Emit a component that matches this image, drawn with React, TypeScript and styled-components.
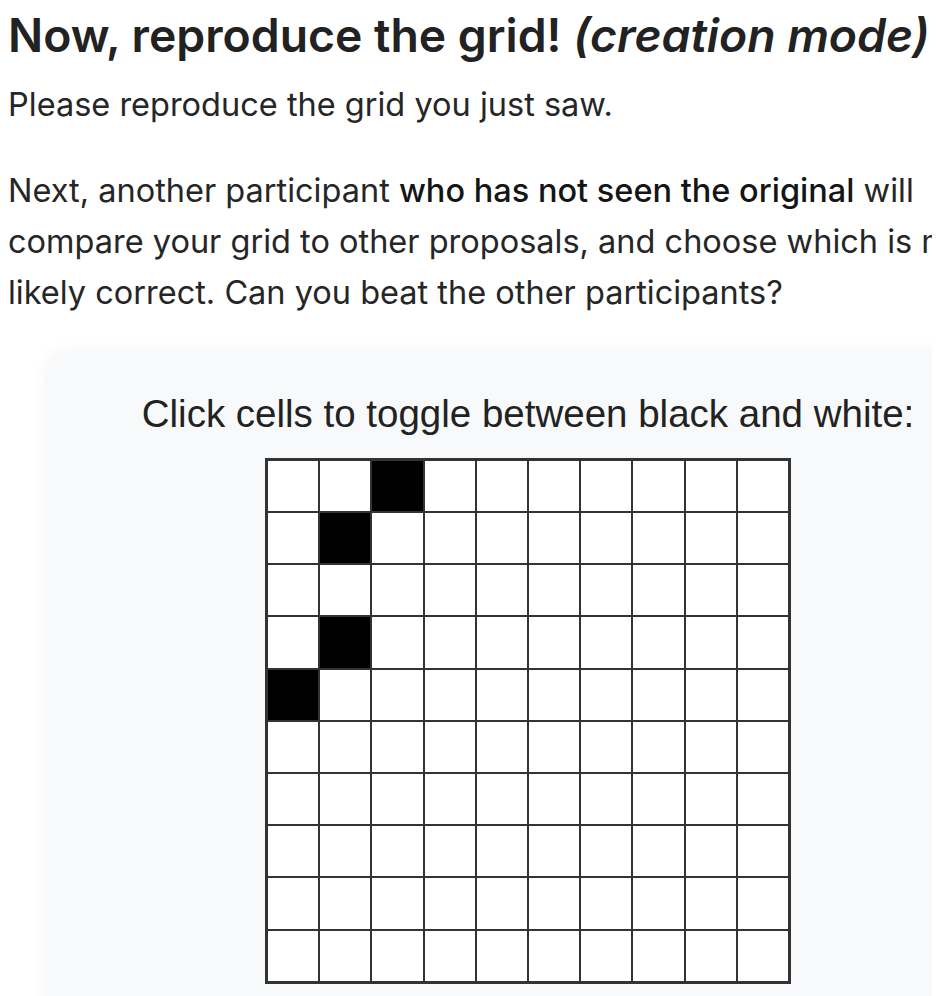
import { useState } from "react";
import styled, { createGlobalStyle } from "styled-components";

const GlobalStyle = createGlobalStyle`
  body {
    margin: 8px;
    background: #ffffff;
    font-family: Inter, "Noto Sans", sans-serif;
    color: #222;
  }
`;

const Page = styled.div`
  width: 1020px;
`;

const Title = styled.h1`
  font-size: 46.3px;
  font-weight: 600;
  line-height: 1.2;
  margin: 0 0 15px 0;
  color: #222;

  em {
    font-style: italic;
  }
`;

const Text = styled.p`
  font-size: 32.5px;
  line-height: 51px;
  margin: 0 0 35px 0;
  color: #262626;

  strong {
    font-weight: 500;
    color: #151515;
  }
`;

const Card = styled.div`
  width: 960px;
  margin: 36px 0 0 40px;
  background: #f8f9fb;
  border-radius: 16px;
  box-shadow: 0 0 18px rgba(0, 0, 0, 0.06);
  padding: 38px 0 40px 0;
  display: flex;
  flex-direction: column;
  align-items: center;
`;

const Prompt = styled.div`
  font-family: "Liberation Sans", Arial, sans-serif;
  font-size: 38.5px;
  line-height: 1.15;
  color: #222;
  margin-bottom: 22px;
`;

const Board = styled.div`
  display: grid;
  grid-template-columns: repeat(10, 50.2px);
  grid-auto-rows: 50.2px;
  gap: 2px;
  background: #333;
  border: 3px solid #333;
`;

const Cell = styled.div<{ $on: boolean }>`
  background: ${(p) => (p.$on ? "#000" : "#fff")};
  cursor: pointer;
`;

const initial = [
  [0, 2],
  [1, 1],
  [3, 1],
  [4, 0],
];

export default function App() {
  const [cells, setCells] = useState<boolean[]>(() => {
    const arr = new Array(100).fill(false);
    initial.forEach(([r, c]) => (arr[r * 10 + c] = true));
    return arr;
  });

  const toggle = (idx: number) => {
    const next = [...cells];
    next[idx] = !next[idx];
    setCells(next);
  };

  return (
    <Page>
      <GlobalStyle />
      <Title>
        Now, reproduce the grid! <em>(creation mode)</em>
      </Title>
      <Text>Please reproduce the grid you just saw.</Text>
      <Text>
        Next, another participant <strong>who has not seen the original</strong>{" "}
        will compare your grid to other proposals, and choose which is most
        likely correct. Can you beat the other participants?
      </Text>
      <Card>
        <Prompt>Click cells to toggle between black and white:</Prompt>
        <Board>
          {cells.map((on, idx) => (
            <Cell key={idx} $on={on} onClick={() => toggle(idx)} />
          ))}
        </Board>
      </Card>
    </Page>
  );
}
